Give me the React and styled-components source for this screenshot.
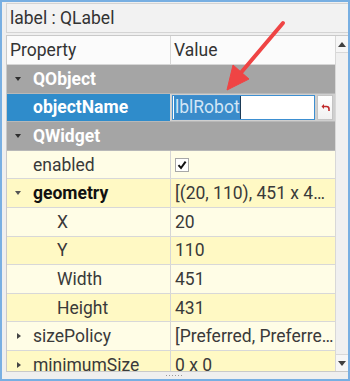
import React from 'react';
import styled, { createGlobalStyle } from 'styled-components';

const GlobalStyle = createGlobalStyle`
  html, body {
    margin: 0;
    padding: 0;
    background: #ffffff;
  }
  body {
    font-family: Roboto, "Noto Sans", "Liberation Sans", sans-serif;
  }
`;

const Frame = styled.div`
  position: relative;
  width: 350px;
  height: 381px;
  box-sizing: border-box;
  border: 2px solid #78afe2;
  background: #efefef;
  padding: 1px 0 0 4px;
  display: flex;
  flex-direction: column;
  overflow: hidden;
`;

const Caption = styled.div`
  height: 30px;
  flex: none;
  box-sizing: border-box;
  border: 1px solid #d4d4d4;
  border-right: none;
  background: #f2f2f2;
  display: flex;
  align-items: center;
  padding-left: 3px;
  font-size: 17.5px;
  color: #333333;
`;

const Table = styled.div`
  margin-top: 2px;
  height: 337px;
  flex: none;
  box-sizing: border-box;
  border: 1px solid #c9c9c9;
  border-right: none;
  display: flex;
  background: #ffffff;
`;

const Body = styled.div`
  flex: 1;
  display: flex;
  flex-direction: column;
  overflow: hidden;
`;

const HeaderRow = styled.div`
  height: 29px;
  flex: none;
  box-sizing: border-box;
  display: flex;
  background: #fbfbfb;
  border-bottom: 1px solid #d6d6d6;
  font-size: 17.5px;
  color: #333333;
`;

const HeaderCell = styled.div`
  width: ${p => (p.$first ? '164px' : 'auto')};
  flex: ${p => (p.$first ? 'none' : '1')};
  border-right: ${p => (p.$first ? '1px solid #d6d6d6' : 'none')};
  display: flex;
  align-items: center;
  padding-left: 3px;
  box-sizing: border-box;
`;

const Row = styled.div`
  height: 28.6px;
  flex: none;
  box-sizing: border-box;
  display: flex;
  font-size: 17.5px;
  background: ${p =>
    p.$kind === 'group' ? '#a5a5a5' : p.$shade === 'dark' ? '#fff9c4' : '#fffde6'};
  border-bottom: 1px solid ${p => (p.$kind === 'group' ? '#b8b8b8' : '#d8d8d8')};
`;

const NameCell = styled.div`
  width: ${p => (p.$span ? 'auto' : '164px')};
  flex: ${p => (p.$span ? '1' : 'none')};
  box-sizing: border-box;
  display: flex;
  align-items: center;
  padding-left: 8px;
  border-right: ${p => (p.$span ? 'none' : '1px solid #d6d6d6')};
  background: ${p => (p.$selected ? '#2f8ccb' : 'transparent')};
  color: ${p => (p.$light ? '#ffffff' : p.$bold ? '#111111' : '#3a3a3a')};
  font-weight: ${p => (p.$bold ? 700 : 400)};
  white-space: nowrap;
  overflow: hidden;
`;

const CaretSlot = styled.span`
  width: ${p => 18 + p.$level * 24}px;
  flex: none;
  display: flex;
  align-items: center;
  padding-left: ${p => (p.$dir === 'right' ? '2px' : '0')};
  box-sizing: border-box;
`;

const Caret = styled.span`
  width: 0;
  height: 0;
  ${p =>
    p.$dir === 'down'
      ? `border-left: 3.5px solid transparent;
         border-right: 3.5px solid transparent;
         border-top: 4px solid ${p.$color};`
      : `border-top: 3.5px solid transparent;
         border-bottom: 3.5px solid transparent;
         border-left: 4px solid ${p.$color};`}
`;

const ValueCell = styled.div`
  flex: 1;
  min-width: 0;
  box-sizing: border-box;
  display: flex;
  align-items: center;
  padding-left: 4px;
  color: #3a3a3a;
  white-space: nowrap;
  overflow: hidden;
`;

const EditCell = styled.div`
  flex: 1;
  display: flex;
  align-items: stretch;
  gap: 1px;
  padding: 1px 2px 1px 1px;
  background: #cfcfcf;
  box-sizing: border-box;
`;

const Editor = styled.div`
  flex: 1;
  display: flex;
  align-items: center;
  padding-left: 1px;
  background: #ffffff;
  border: 1px solid #3d8fd1;
  box-sizing: border-box;
`;

const Selection = styled.span`
  background: #3a8bca;
  color: #d2e6f6;
  padding: 1px 0 1px 1px;
  border-right: 1px solid #1d3b57;
  line-height: 21px;
`;

const ResetButton = styled.div`
  width: 16px;
  flex: none;
  margin-left: 1px;
  display: flex;
  align-items: center;
  justify-content: center;
  background: linear-gradient(#ffffff, #f1f1f1);
  border: 1px solid #c4c4c4;
  box-sizing: border-box;
`;

const CheckBox = styled.span`
  width: 14px;
  height: 14px;
  box-sizing: border-box;
  border: 1px solid #a8a8a8;
  background: #ffffff;
  display: flex;
  align-items: center;
  justify-content: center;
`;

const ScrollBar = styled.div`
  width: 13px;
  flex: none;
  display: flex;
  flex-direction: column;
  justify-content: space-between;
  background: #f0f0f0;
  border-left: 1px solid #d8d8d8;
  box-sizing: border-box;
`;

const ScrollButton = styled.div`
  height: 16px;
  display: flex;
  align-items: center;
  justify-content: center;
  border-${p => (p.$up ? 'bottom' : 'top')}: 1px solid #d8d8d8;
  background: #f6f6f6;
`;

const ScrollArrow = styled.span`
  width: 0;
  height: 0;
  border-left: 4px solid transparent;
  border-right: 4px solid transparent;
  ${p => (p.$up ? 'border-bottom' : 'border-top')}: 5px solid #404040;
`;

const Footer = styled.div`
  flex: 1;
  display: flex;
  justify-content: center;
  align-items: center;
  padding-right: 4px;
`;

const Grip = styled.span`
  width: 18px;
  height: 1px;
  background: repeating-linear-gradient(90deg, #9a9a9a 0 1px, transparent 1px 3px);
`;

const Overlay = styled.svg`
  position: absolute;
  top: -2px;
  left: -2px;
  pointer-events: none;
`;

const rows = [
  { kind: 'group', label: 'QObject' },
  { kind: 'selected', label: 'objectName' },
  { kind: 'group', label: 'QWidget' },
  { label: 'enabled', check: true },
  { label: 'geometry', bold: true, expand: 'down', value: '[(20, 110), 451 x 4…' },
  { label: 'X', level: 1, value: '20' },
  { label: 'Y', level: 1, value: '110' },
  { label: 'Width', level: 1, value: '451' },
  { label: 'Height', level: 1, value: '431' },
  { label: 'sizePolicy', expand: 'right', value: '[Preferred, Preferre…' },
  { label: 'minimumSize', expand: 'right', value: '0 x 0' },
];

const Check = () => (
  <svg width="12" height="12" viewBox="0 0 12 12">
    <path d="M2.5 6.2 L5 9 L9.6 2.6" fill="none" stroke="#111" strokeWidth="2" />
  </svg>
);

const UndoIcon = () => (
  <svg width="9" height="9" viewBox="0 0 9 9">
    <path d="M3 1 L0.5 3.5 L3 6 Z" fill="#c0282a" />
    <path d="M2.5 3.5 H5.5 Q8 3.5 8 6 V8" fill="none" stroke="#c0282a" strokeWidth="1.6" />
  </svg>
);

const PropertyRow = ({ row, index }) => {
  const level = row.level || 0;
  if (row.kind === 'group') {
    return (
      <Row $kind="group">
        <NameCell $span $light $bold>
          <CaretSlot $level={0}>
            <Caret $dir="down" $color="#2e2e2e" />
          </CaretSlot>
          {row.label}
        </NameCell>
      </Row>
    );
  }
  if (row.kind === 'selected') {
    return (
      <Row $kind="group">
        <NameCell $selected $light $bold>
          <CaretSlot $level={0} />
          {row.label}
        </NameCell>
        <EditCell>
          <Editor>
            <Selection>lblRobot</Selection>
          </Editor>
          <ResetButton>
            <UndoIcon />
          </ResetButton>
        </EditCell>
      </Row>
    );
  }
  const shade = (index - 3) % 2 === 0 ? 'light' : 'dark';
  return (
    <Row $shade={shade}>
      <NameCell $bold={row.bold}>
        <CaretSlot $level={level} $dir={row.expand}>
          {row.expand && <Caret $dir={row.expand} $color={row.expand === 'down' ? '#555' : '#444'} />}
        </CaretSlot>
        {row.label}
      </NameCell>
      <ValueCell>
        {row.check ? (
          <CheckBox>
            <Check />
          </CheckBox>
        ) : (
          row.value
        )}
      </ValueCell>
    </Row>
  );
};

const App = () => {
  return (
    <>
      <GlobalStyle />
      <Frame>
        <Caption>label : QLabel</Caption>
        <Table>
          <Body>
            <HeaderRow>
              <HeaderCell $first>Property</HeaderCell>
              <HeaderCell>Value</HeaderCell>
            </HeaderRow>
            {rows.map((row, i) => (
              <PropertyRow key={row.label} row={row} index={i} />
            ))}
          </Body>
          <ScrollBar>
            <ScrollButton $up>
              <ScrollArrow $up />
            </ScrollButton>
            <ScrollButton>
              <ScrollArrow />
            </ScrollButton>
          </ScrollBar>
        </Table>
        <Footer>
          <Grip />
        </Footer>
        <Overlay width="350" height="381" viewBox="0 0 350 381">
          <line x1="283" y1="23" x2="239" y2="75" stroke="#ef4444" strokeWidth="4" strokeLinecap="round" />
          <polygon points="227,90 233,65 249,79" fill="#ef4444" strokeLinejoin="round" stroke="#ef4444" strokeWidth="1" />
        </Overlay>
      </Frame>
    </>
  );
};

export default App;
